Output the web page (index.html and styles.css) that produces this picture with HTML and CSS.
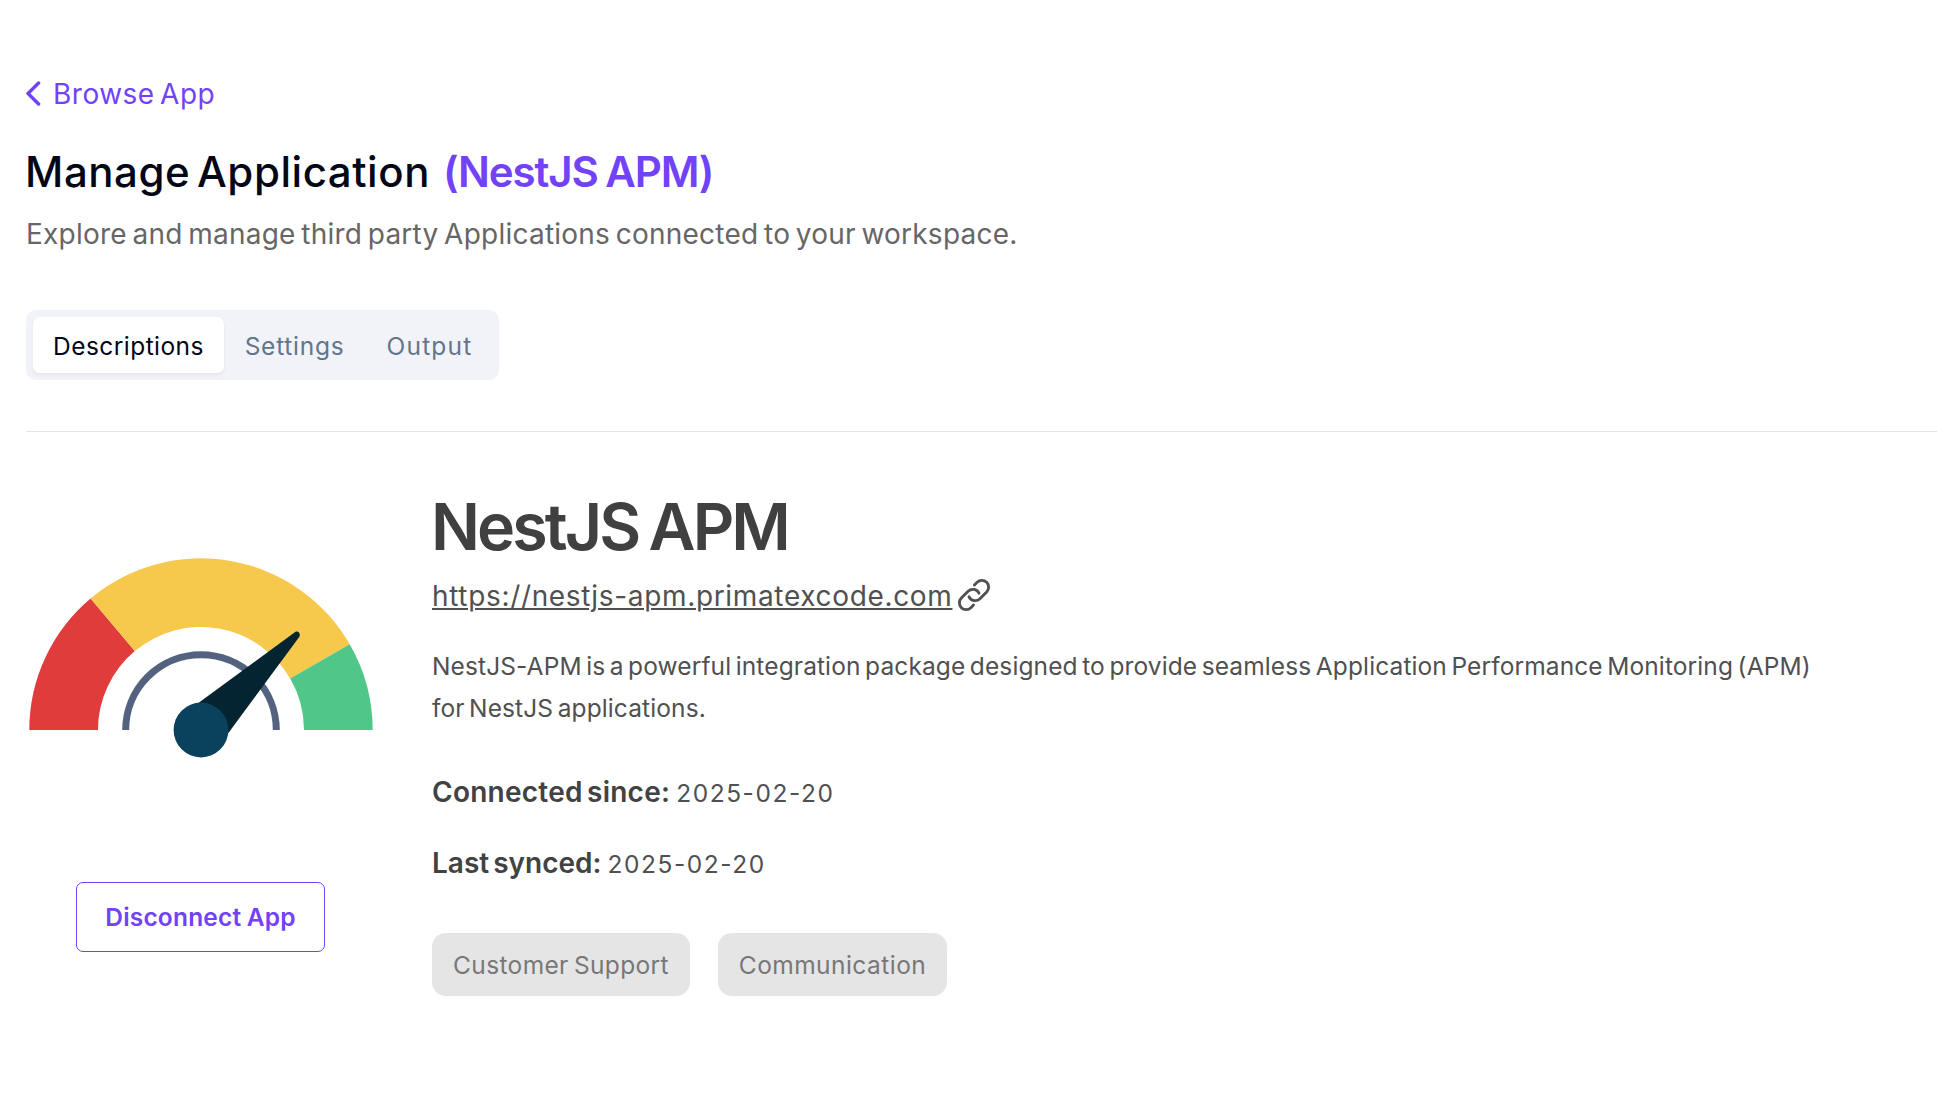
FILE: index.html
```html
<!DOCTYPE html>
<html lang="en">
<head>
<meta charset="utf-8">
<title>Manage Application</title>
<link rel="stylesheet" href="styles.css">
</head>
<body>
<main class="page">
  <a class="back">
    <svg class="back-icon" width="16" height="26" viewBox="0 0 16 26"><path d="M12.6 2 2 12.5l10.6 10.5" fill="none" stroke="currentColor" stroke-width="3.4" stroke-linecap="round" stroke-linejoin="round"/></svg>
    <span>Browse App</span>
  </a>
  <h1 class="title"><span class="title-main">Manage Application</span><span class="title-app">(NestJS APM)</span></h1>
  <p class="subtitle">Explore and manage third party Applications connected to your workspace.</p>
  <nav class="tabs">
    <button class="tab tab-active">Descriptions</button>
    <button class="tab tab-settings">Settings</button>
    <button class="tab tab-output">Output</button>
  </nav>
  <hr class="divider">
  <section class="content">
    <aside class="side">
      <svg class="gauge" width="350" height="350" viewBox="-175 -175 350 350">
        <path fill="#e03c3c" d="M-171.7 0A171.7 171.7 0 0 1-110.4-131.5L-66.2-78.9A103 103 0 0 0-103 0Z"/>
        <path fill="#f6c94c" d="M-110.4-131.5A171.7 171.7 0 0 1 148.7-85.8L89.2-51.5A103 103 0 0 0-66.2-78.9Z"/>
        <path fill="#50c689" d="M148.7-85.8A171.7 171.7 0 0 1 171.7 0H103A103 103 0 0 0 89.2-51.5Z"/>
        <path fill="none" stroke="#52627f" stroke-width="7" d="M-75.3 0A75.3 75.3 0 0 1 75.3 0"/>
        <path fill="#052432" d="M-2-27.4 94.2-97.9C97.2-99.8 100.3-96 98-92.8L27.4 3 0 10Z"/>
        <circle r="27.4" fill="#0a415c"/>
      </svg>
      <button class="disconnect">Disconnect App</button>
    </aside>
    <article class="details">
      <h2 class="name">NestJS APM</h2>
      <div class="link-row">
        <a class="link">https://nestjs-apm.primatexcode.com</a>
        <svg class="link-icon" width="36" height="36" viewBox="0 0 24 24" fill="none" stroke="currentColor" stroke-width="1.9" stroke-linecap="round" stroke-linejoin="round"><path d="M13.19 8.688a4.5 4.5 0 0 1 1.242 7.244l-4.5 4.5a4.5 4.5 0 0 1-6.364-6.364l1.757-1.757m13.35-.622 1.757-1.757a4.5 4.5 0 0 0-6.364-6.364l-4.5 4.5a4.5 4.5 0 0 0 1.242 7.244" transform="matrix(0 1 1 0 0 0)"/></svg>
      </div>
      <p class="about">NestJS-APM is a powerful integration package designed to provide seamless Application Performance Monitoring (APM)<br>for NestJS applications.</p>
      <p class="meta"><strong class="meta-label">Connected since:</strong><span class="meta-date">2025-02-20</span></p>
      <p class="meta"><strong class="meta-label meta-label-sync">Last synced:</strong><span class="meta-date">2025-02-20</span></p>
      <div class="tags"><span class="tag">Customer Support</span><span class="tag tag-wide">Communication</span></div>
    </article>
  </section>
</main>
</body>
</html>
```
FILE: styles.css
```css
* { box-sizing: border-box; margin: 0; padding: 0; }
body { background: #fff; color: #505050; font-family: Inter, "Noto Sans", sans-serif; overflow: hidden; }
button { font-family: inherit; border: 0; background: none; white-space: nowrap; }
.page { padding: 73px 0 0 26px; }

.back { display: flex; align-items: center; gap: 11px; height: 42px; color: #7142f8; font-size: 28px; font-weight: 400; letter-spacing: .5px; word-spacing: -3px; }
.back-icon { flex: none; }
.title { display: flex; gap: 13px; margin-top: 32px; font-size: 42px; line-height: 50px; white-space: nowrap; margin-left: -1px; }
.title-main { color: #020617; font-weight: 500; letter-spacing: .55px; word-spacing: -5px; }
.title-app { color: #7142f8; font-weight: 600; letter-spacing: -1.1px; word-spacing: -2px; }
.subtitle { margin-top: 16px; color: #666; font-size: 28px; line-height: 42px; font-weight: 400; letter-spacing: .235px; word-spacing: -2.5px; }

.tabs { display: flex; width: 473px; height: 70px; margin-top: 55px; padding: 7px; border-radius: 10px; background: #f1f3f8; }
.tab { flex: none; height: 56px; padding-top: 2px; font-size: 24.5px; font-weight: 400; color: #64748b; border-radius: 7px; text-align: center; }
.tab-active { width: 191px; background: #fff; color: #020617; letter-spacing: .45px; box-shadow: 0 2px 4px rgba(0, 0, 0, .06); }
.tab-settings { width: 141px; letter-spacing: .733px; }
.tab-output { width: 129px; letter-spacing: 1.2px; }
.divider { height: 1px; margin-top: 51px; border: 0; background: #e4e4ed; }

.content { display: flex; gap: 56px; }
.side { display: flex; flex-direction: column; align-items: flex-start; width: 350px; padding-top: 123px; }
.gauge { display: block; flex: none; }
.disconnect { width: 249px; height: 70px; margin: -23px 0 0 50px; border: 1px solid #7142f8; border-radius: 7px; color: #7142f8; font-size: 24.5px; font-weight: 600; letter-spacing: .2px; word-spacing: -1px; }

.details { flex: 1; padding-top: 61px; }
.name { margin-left: -1px; font-size: 64.5px; line-height: 68px; font-weight: 600; letter-spacing: -2.9px; word-spacing: -3px; color: #404040; }
.link-row { display: flex; align-items: center; gap: 4px; height: 42px; margin-top: 14px; color: #505050; }
.link { font-size: 28px; line-height: 42px; font-weight: 400; letter-spacing: .66px; text-decoration: underline; text-decoration-thickness: 2px; text-underline-offset: 2px; }
.link-icon { margin-top: -3px; }
.about { margin-top: 28px; font-size: 24.5px; line-height: 42px; font-weight: 400; letter-spacing: .112px; word-spacing: -2.5px; white-space: nowrap; }
.meta { display: flex; align-items: baseline; gap: 6px; height: 42px; line-height: 42px; margin-top: 29px; }
.about + .meta { margin-top: 42px; }
.meta-label { color: #424242; font-size: 28px; font-weight: 600; letter-spacing: .25px; word-spacing: -3px; }
.meta-label-sync { letter-spacing: 0; }
.meta-date { font-size: 24.5px; font-weight: 400; letter-spacing: 1.55px; }
.tags { display: flex; gap: 28px; margin-top: 49px; }
.tag { width: 258px; height: 63px; border-radius: 14px; background: #e5e5e5; color: #777; font-size: 24.5px; line-height: 65px; font-weight: 400; text-align: center; letter-spacing: .35px; word-spacing: -2px; }
.tag-wide { width: 229px; letter-spacing: .455px; }
```
